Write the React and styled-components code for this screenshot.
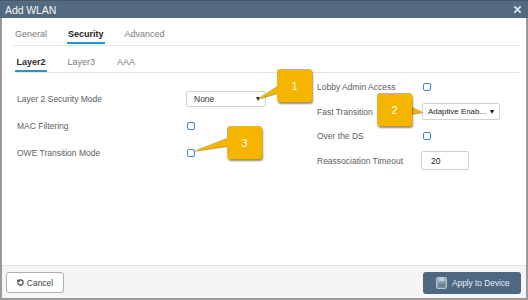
import React from 'react'
import { styled, createGlobalStyle } from 'styled-components'
import { RotateCcw } from 'lucide-react'

const GlobalStyle = createGlobalStyle`
  * { box-sizing: border-box; }
  html, body { margin: 0; padding: 0; background: #ffffff; }
  body { font-family: "Liberation Sans", Arial, sans-serif; }
`

const callouts = [
  { n: 1, x: 277, y: 69, tail: '277,86 277,93 257,99' },
  { n: 2, x: 377, y: 93, tail: '410,106 410,114 423,112' },
  { n: 3, x: 227, y: 126, tail: '227,138 227,146 193,151' },
]

function Checkbox() {
  return <Box />
}

function App() {
  return (
    <Frame>
      <GlobalStyle />
      <Header>
        <Title>Add WLAN</Title>
        <Close viewBox="0 0 8 8">
          <path d="M1 1 L7 7 M7 1 L1 7" />
        </Close>
      </Header>
      <Panel>
        <TabBar>
          <Tab>General</Tab>
          <Tab $active>Security</Tab>
          <Tab>Advanced</Tab>
        </TabBar>
        <SubTabBar>
          <SubTab $active>Layer2</SubTab>
          <SubTab>Layer3</SubTab>
          <SubTab>AAA</SubTab>
        </SubTabBar>
        <Body>
          <LeftColumn>
            <Row $h={27}>
              <Label $w={169}>Layer 2 Security Mode</Label>
              <Select $w={80}>
                <span>None</span>
                <Arrow>▾</Arrow>
              </Select>
            </Row>
            <Row $h={27}>
              <Label $w={170}>MAC Filtering</Label>
              <Checkbox />
            </Row>
            <Row $h={27}>
              <Label $w={170}>OWE Transition Mode</Label>
              <Checkbox />
            </Row>
          </LeftColumn>
          <RightColumn>
            <Row $h={24.5}>
              <Label $w={106}>Lobby Admin Access</Label>
              <Checkbox />
            </Row>
            <Row $h={24.5}>
              <Label $w={105}>Fast Transition</Label>
              <Select $w={78} $h={17}>
                <Value>Adaptive Enab...</Value>
                <Arrow>▾</Arrow>
              </Select>
            </Row>
            <Row $h={24.5}>
              <Label $w={106}>Over the DS</Label>
              <Checkbox />
            </Row>
            <Row $h={24.5}>
              <Label $w={104}>Reassociation Timeout</Label>
              <Input>20</Input>
            </Row>
          </RightColumn>
        </Body>
        <Footer>
          <CancelButton>
            <RotateCcw size={7} strokeWidth={3.5} />
            Cancel
          </CancelButton>
          <ApplyButton>
            <SaveIcon viewBox="0 0 11 12">
              <rect x="0.5" y="0.5" width="10" height="11" rx="1" fill="#8d9fb1" stroke="#b7c4d0" />
              <rect x="2.5" y="1" width="6" height="3" fill="#c7d1da" />
              <rect x="2" y="6.5" width="7" height="4" fill="#6f849a" />
            </SaveIcon>
            Apply to Device
          </ApplyButton>
        </Footer>
      </Panel>
      <Tails viewBox="0 0 528 300">
        {callouts.map((c) => (
          <g key={c.n}>
            <polygon points={c.tail} fill="#6b5a2a" opacity="0.55" transform="translate(0.6,1)" />
            <polygon points={c.tail} fill="#f5b400" />
          </g>
        ))}
      </Tails>
      {callouts.map((c) => (
        <Callout key={c.n} style={{ left: c.x, top: c.y }}>{c.n}</Callout>
      ))}
    </Frame>
  )
}

const Frame = styled.div`
  position: relative;
  width: 528px;
  height: 300px;
  display: flex;
  flex-direction: column;
  overflow: hidden;
  background: #ffffff;
`

const Header = styled.div`
  height: 18px;
  flex: none;
  display: flex;
  align-items: center;
  justify-content: space-between;
  padding: 0 7px 0 5px;
  background: #536a80;
  border-top: 1px solid #44576b;
`

const Title = styled.div`
  color: #f4f6f8;
  font-size: 10.5px;
  letter-spacing: -0.1px;
`

const Close = styled.svg`
  width: 7px;
  height: 7px;
  stroke: #e3e8ed;
  stroke-width: 2;
  stroke-linecap: round;
`

const Panel = styled.div`
  flex: 1;
  display: flex;
  flex-direction: column;
  border: 2px solid #9a9a9a;
  border-top: none;
`

const TabBar = styled.div`
  display: flex;
  margin: 9px 5px 0 11px;
  padding: 0 0 1px 1px;
  border-bottom: 1px solid #e4e4e4;
`

const Tab = styled.div`
  height: 17px;
  line-height: 15px;
  padding: 0 1px;
  margin-right: 19px;
  font-size: 9px;
  font-weight: ${(p) => (p.$active ? 700 : 400)};
  color: ${(p) => (p.$active ? '#1e1e1e' : '#777b80')};
  border-bottom: 2px solid ${(p) => (p.$active ? '#1b9ad6' : 'transparent')};
`

const SubTabBar = styled.div`
  display: flex;
  margin: 9px 7px 0 13px;
  border-bottom: 1px solid #e4e4e4;
`

const SubTab = styled.div`
  height: 17px;
  line-height: 15px;
  padding: 0 1.5px;
  margin-right: 19px;
  font-size: 9px;
  font-weight: ${(p) => (p.$active ? 700 : 400)};
  color: ${(p) => (p.$active ? '#2a2a2a' : '#777b80')};
  border-bottom: 2px solid ${(p) => (p.$active ? '#1b9ad6' : 'transparent')};
`

const Body = styled.div`
  flex: 1;
  display: flex;
  padding-left: 15px;
`

const LeftColumn = styled.div`
  width: 300px;
  padding-top: 12px;
  display: flex;
  flex-direction: column;
`

const RightColumn = styled.div`
  flex: 1;
  padding-top: 2px;
  display: flex;
  flex-direction: column;
`

const Row = styled.div`
  height: ${(p) => p.$h}px;
  display: flex;
  align-items: center;
`

const Label = styled.div`
  width: ${(p) => p.$w}px;
  flex: none;
  font-size: 8.5px;
  color: #5a5e63;
  white-space: nowrap;
`

const Box = styled.div`
  width: 8px;
  height: 8px;
  border: 1.5px solid #3d7fd8;
  border-radius: 2px;
  background: #ffffff;
`

const Select = styled.div`
  width: ${(p) => p.$w}px;
  height: ${(p) => p.$h || 16}px;
  display: flex;
  align-items: center;
  justify-content: space-between;
  padding: 0 5px 0 7px;
  border: 1px solid #c8d3dc;
  border-radius: 2px;
  font-size: 8.5px;
  color: #333333;
  white-space: nowrap;
`

const Value = styled.span`
  color: #1e1e1e;
  margin-left: -2px;
  font-size: 7.9px;
  white-space: nowrap;
`

const Arrow = styled.span`
  flex: none;
  font-size: 8px;
  color: #111111;
`

const Input = styled.div`
  width: 48px;
  height: 19px;
  display: flex;
  align-items: center;
  padding-left: 9px;
  border: 1px solid #c8d3dc;
  border-radius: 2px;
  font-size: 8.5px;
  color: #222222;
`

const Footer = styled.div`
  height: 33px;
  flex: none;
  display: flex;
  align-items: flex-start;
  justify-content: space-between;
  padding: 6px 5px 0 4px;
  background: #f5f5f5;
  border-top: 1px solid #e2e2e2;
`

const CancelButton = styled.div`
  width: 58px;
  height: 21px;
  display: flex;
  align-items: center;
  justify-content: center;
  gap: 3px;
  background: #ffffff;
  border: 1px solid #a9b2bb;
  border-radius: 3px;
  font-size: 8.5px;
  color: #3a3d40;
`

const ApplyButton = styled.div`
  width: 98px;
  height: 22px;
  display: flex;
  align-items: center;
  gap: 5px;
  padding-left: 13px;
  background: #4e6883;
  border-radius: 3px;
  font-size: 8.3px;
  color: #e9eef3;
`

const SaveIcon = styled.svg`
  width: 11px;
  height: 12px;
`

const Tails = styled.svg`
  position: absolute;
  left: 0;
  top: 0;
  width: 528px;
  height: 300px;
  pointer-events: none;
`

const Callout = styled.div`
  position: absolute;
  width: 35px;
  height: 33px;
  display: flex;
  align-items: center;
  justify-content: center;
  background: #f5b400;
  border-radius: 3px;
  box-shadow: 1px 2px 2px rgba(60, 50, 20, 0.55);
  color: #ffffff;
  font-size: 11px;
`

export default App
